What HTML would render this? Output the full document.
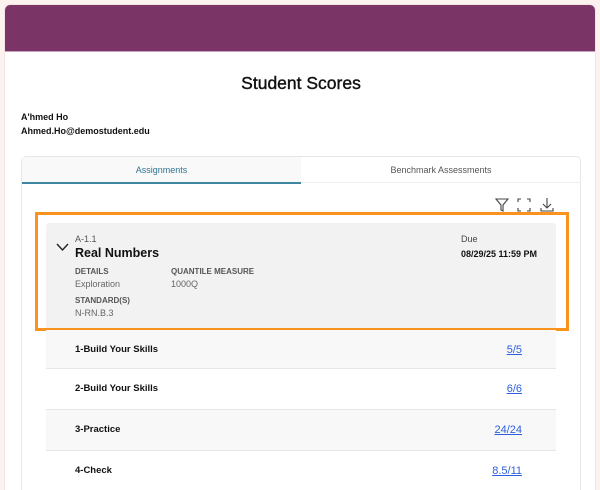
<!DOCTYPE html>
<html><head><style>
*{margin:0;padding:0;box-sizing:border-box}
body{width:600px;height:490px;overflow:hidden;background:#fcf3f1;font-family:"Liberation Sans",sans-serif;color:#111;position:relative}
.card{position:absolute;left:4px;top:4px;width:592px;height:486px;background:#fff;border-radius:6px 6px 0 0;overflow:hidden;border:1px solid #f3e3e0;border-bottom:none}
.hdr{position:absolute;left:0;top:0;width:100%;height:47px;background:#7b3466;border-bottom:1px solid #c9a2bc}
.abs{position:absolute}
.title{left:0;width:592px;top:68px;text-align:center;font-size:17.5px;font-weight:normal;-webkit-text-stroke:0.4px #111}
.tabs{left:16px;top:151px;width:560px;height:336px;border:1px solid #e6e6e6;border-bottom:none;border-radius:5px 5px 0 0}
.tab1{left:0;top:0;width:279px;height:27px;background:#f9f9f9;border-bottom:2px solid #3f86a0;color:#2f7590;font-size:9px;text-align:center;line-height:27px}
.tab2{left:279px;top:0;width:280px;height:26px;border-bottom:1px solid #eee;color:#555;font-size:9px;text-align:center;line-height:27px}
.panel{left:41px;top:218px;width:510px;height:268px;background:#f2f2f2;border-radius:3px 3px 0 0}
.orange{left:30px;top:207px;width:534px;height:119px;border:3px solid #f7931e}
.row{left:41px;width:510px;height:41px;border-top:1px solid #e6e6e6;font-size:9.5px;font-weight:bold;line-height:40px}
.row span{position:absolute;left:29px}
.row a{position:absolute;right:34px;color:#2c5fe0;text-decoration:underline;font-weight:normal;font-size:11px}
.lbl{font-size:8px;color:#555;font-weight:bold}
.val{font-size:9px;color:#666}
</style></head><body>
<div class="card">
<div class="hdr"></div>
<div class="abs title">Student Scores</div>
<div class="abs" style="left:16px;top:107px;font-size:9px;font-weight:bold">A'hmed Ho</div>
<div class="abs" style="left:16px;top:121px;font-size:9px;font-weight:bold">Ahmed.Ho@demostudent.edu</div>
<div class="abs tabs">
<div class="abs tab1">Assignments</div>
<div class="abs tab2">Benchmark Assessments</div>
</div>
<svg class="abs" style="left:489px;top:192px" width="64" height="16" viewBox="0 0 64 16" fill="none" stroke="#444" stroke-width="1.1">
<path d="M2 2h12l-5 6v6l-2-1V8z"/>
<path d="M24 5V2h3M33 2h3v3M36 11v3h-3M27 14h-3v-3"/>
<path d="M53 1v9M49 7l4 4 4-4M47 11v3h12v-3"/>
</svg>
<div class="abs panel"></div>
<div class="abs" style="left:70px;top:229px;font-size:9px;color:#555">A-1.1</div>
<svg class="abs" style="left:51px;top:238px" width="13" height="9" viewBox="0 0 13 9"><path d="M1 1l5.5 6L12 1" fill="none" stroke="#222" stroke-width="1.4"/></svg>
<div class="abs" style="left:70px;top:241px;font-size:12.5px;font-weight:bold">Real Numbers</div>
<div class="abs lbl" style="left:70px;top:262px">DETAILS</div>
<div class="abs val" style="left:70px;top:274px">Exploration</div>
<div class="abs lbl" style="left:166px;top:262px">QUANTILE MEASURE</div>
<div class="abs val" style="left:166px;top:274px">1000Q</div>
<div class="abs lbl" style="left:70px;top:291px">STANDARD(S)</div>
<div class="abs val" style="left:70px;top:303px">N-RN.B.3</div>
<div class="abs" style="left:456px;top:229px;font-size:9px;color:#444">Due</div>
<div class="abs" style="left:456px;top:244px;font-size:9px;font-weight:bold">08/29/25 11:59 PM</div>
<div class="abs orange"></div>
<div class="abs row" style="top:325px;background:#f8f8f8;border-top:none"><span>1-Build Your Skills</span><a>5/5</a></div>
<div class="abs row" style="top:363px;background:#fff"><span>2-Build Your Skills</span><a>6/6</a></div>
<div class="abs row" style="top:404px;background:#f8f8f8"><span>3-Practice</span><a>24/24</a></div>
<div class="abs row" style="top:445px;background:#fff"><span>4-Check</span><a>8.5/11</a></div>
</div>
</body></html>
